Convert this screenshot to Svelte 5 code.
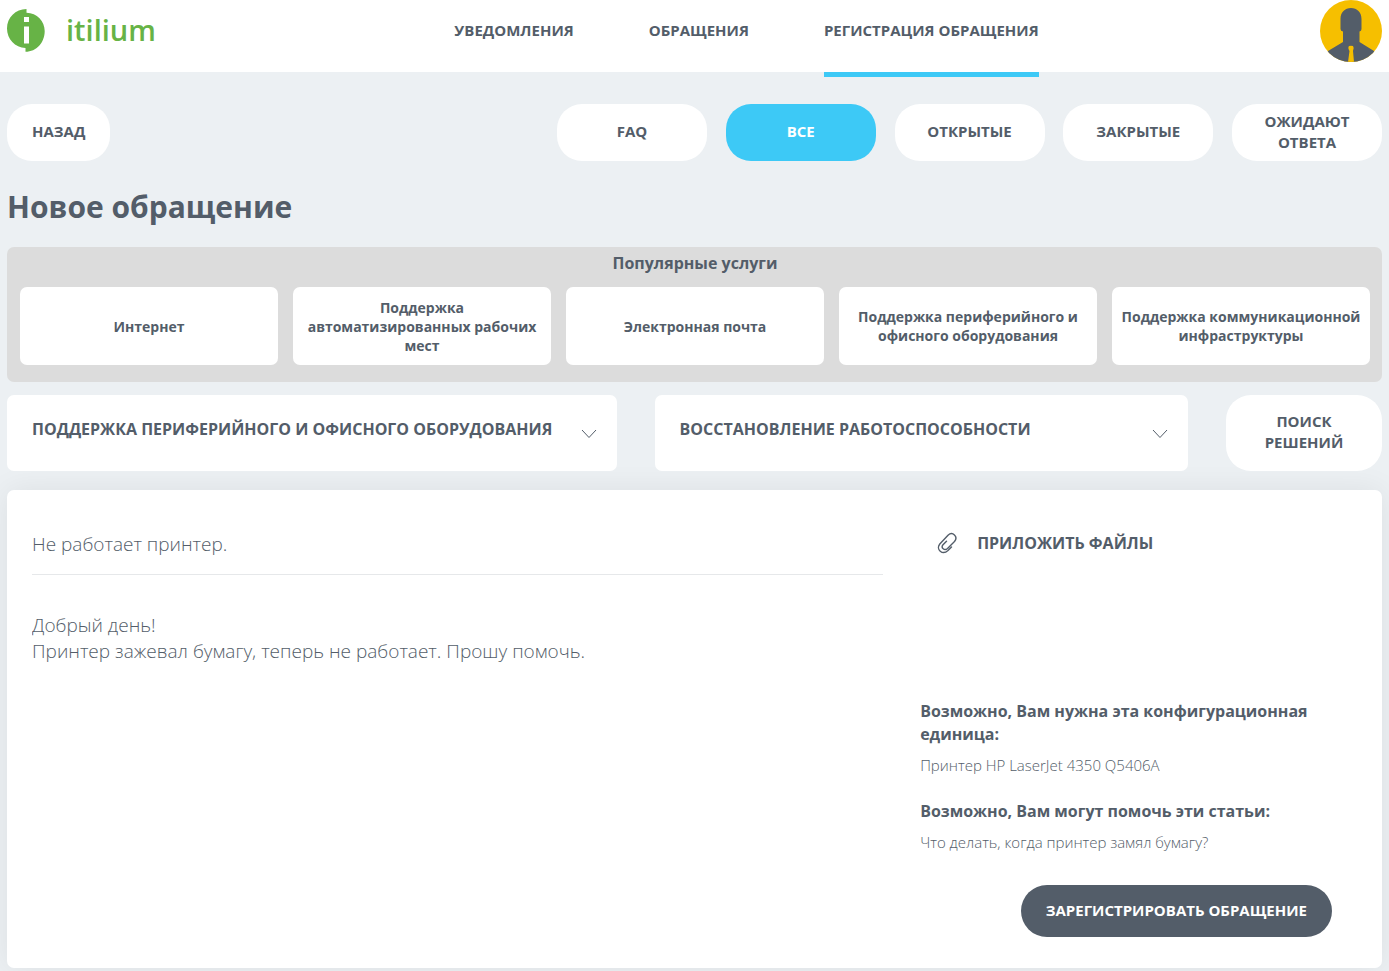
<script>
	const nav = [
		{ label: "Уведомления", href: "#notifications" },
		{ label: "Обращения", href: "#incidents" },
		{ label: "Регистрация обращения", href: "#register" },
	];
	const filters = ["FAQ", "Все", "Открытые", "Закрытые", "Ожидают ответа"];
	const popular = [
		"Интернет",
		"Поддержка автоматизированных рабочих мест",
		"Электронная почта",
		"Поддержка периферийного и офисного оборудования",
		"Поддержка коммуникационной инфраструктуры",
	];
	const services = [
		"Поддержка периферийного и офисного оборудования",
		"Интернет",
		"Электронная почта",
	];
	const components = ["Восстановление работоспособности", "Консультация"];

	let activePage = "#register";
	let activeFilter = "Все";
	let service = services[0];
	let component = components[0];
	let subject = "Не работает принтер.";
	let description =
		"Добрый день!\nПринтер зажевал бумагу, теперь не работает. Прошу помочь.";
</script>

<header>
	<a class="logo" href="#home">
		<svg width="38" height="46" viewBox="0 -2 38 46">
			<path
				fill="#67b346"
				d="M19.500 1V4.700C30 5 37.700 13 37.700 23C37.700 34.500 29.500 43.800 18.500 43.800V40C8 39.500 0 31 0 20.500C0 9.500 8.500 1 19.500 1Z"
			/>
			<path fill="#fff" d="M17 9h5v5h-5zM17 18.500h5V35.500h-5z" />
		</svg>
		<span>itilium</span>
	</a>
	<nav>
		{#each nav as item}
			<a
				href={item.href}
				class:active={item.href === activePage}
				on:click={() => (activePage = item.href)}>{item.label}</a
			>
		{/each}
	</nav>
	<a class="avatar" href="#profile" aria-label="Профиль">
		<svg width="62" height="62" viewBox="0 0 62 62">
			<clipPath id="face"><circle cx="31" cy="31" r="31" /></clipPath>
			<g clip-path="url(#face)">
				<rect width="62" height="62" fill="#f6bf00" />
				<path
					fill="#535d69"
					d="M20.500 19C20.500 12 25 8 31 8S41.500 12 41.500 19V29Q41.500 31 39.500 31.500V42L54 51L62 62H0L8 51L23 42V31.500Q20.500 31 20.500 29Z"
				/>
				<path
					fill="#f6bf00"
					d="M29 46Q31 45.500 33 46Q34.500 48 33 51L34 62H28L29.500 51Q27.500 48 29 46Z"
				/>
			</g>
		</svg>
	</a>
</header>

<main>
	<div class="toolbar">
		<button class="pill">Назад</button>
		<div class="filters">
			{#each filters as filter}
				<button
					class="pill"
					class:active={filter === activeFilter}
					on:click={() => (activeFilter = filter)}>{filter}</button
				>
			{/each}
		</div>
	</div>

	<h1>Новое обращение</h1>

	<section class="popular">
		<h2>Популярные услуги</h2>
		<div class="tiles">
			{#each popular as name}
				<button>{name}</button>
			{/each}
		</div>
	</section>

	<div class="selectors">
		<div class="select">
			<select aria-label="Услуга" bind:value={service}>
				{#each services as name}
					<option>{name}</option>
				{/each}
			</select>
			<svg width="16" height="10" viewBox="0 0 16 10">
				<path d="M1 1L8 8.500L15 1" />
			</svg>
		</div>
		<div class="select">
			<select aria-label="Состав услуги" bind:value={component}>
				{#each components as name}
					<option>{name}</option>
				{/each}
			</select>
			<svg width="16" height="10" viewBox="0 0 16 10">
				<path d="M1 1L8 8.500L15 1" />
			</svg>
		</div>
		<button class="pill">Поиск решений</button>
	</div>

	<form class="card" on:submit|preventDefault>
		<div class="fields">
			<input type="text" aria-label="Тема" bind:value={subject} />
			<textarea aria-label="Описание" bind:value={description}></textarea>
		</div>
		<div class="side">
			<button type="button" class="attach">
				<svg width="20" height="22" viewBox="0 0 20 22">
					<path
						d="M14.500 15L11 18.500C5.500 23.500 -1.500 17.500 2.800 12L11 3.300C15.500 -1 21.500 4.500 17.500 9.500L10.500 16.500C7.500 19 3.500 16 6 12.800L9.500 9.200"
					/>
				</svg>
				Приложить файлы
			</button>
			<div class="hints">
				<h3>Возможно, Вам нужна эта конфигурационная единица:</h3>
				<a href="#item">Принтер HP LaserJet 4350 Q5406A</a>
				<h3>Возможно, Вам могут помочь эти статьи:</h3>
				<a href="#article">Что делать, когда принтер замял бумагу?</a>
			</div>
			<button class="submit">Зарегистрировать обращение</button>
		</div>
	</form>
</main>

<style>
	:global(body) {
		margin: 0;
		background: #ecf0f3;
		color: #535d69;
		font-family: "Open Sans", sans-serif;
	}
	a {
		color: inherit;
		text-decoration: none;
	}
	button,
	select,
	input,
	textarea {
		box-sizing: border-box;
		margin: 0;
		padding: 0;
		border: 0;
		background: none;
		color: inherit;
		font-family: inherit;
	}
	button {
		cursor: pointer;
	}
	header {
		display: flex;
		justify-content: space-between;
		align-items: flex-start;
		height: 72px;
		padding: 0 7px;
		background: #fff;
	}
	.logo {
		display: flex;
		align-items: center;
		gap: 21px;
		width: 166px;
		height: 58px;
		color: #67b346;
		font-size: 29px;
		font-weight: 600;
	}
	nav {
		display: flex;
		gap: 75px;
	}
	nav a {
		height: 72px;
		border-bottom: 5px solid transparent;
		font-size: 15px;
		font-weight: 700;
		line-height: 60px;
		text-transform: uppercase;
	}
	nav a.active {
		border-color: #3dc9f6;
	}
	.avatar svg {
		display: block;
	}
	main {
		padding: 32px 7px 3px;
	}
	.toolbar {
		display: flex;
		justify-content: space-between;
	}
	.filters {
		display: flex;
		justify-content: space-between;
		width: 60%;
	}
	.pill {
		min-height: 57px;
		padding: 0 25px 2px;
		border-radius: 25px;
		background: #fff;
		font-size: 15px;
		font-weight: 700;
		line-height: 21px;
		text-transform: uppercase;
	}
	.filters .pill {
		width: 150px;
	}
	.pill.active {
		background: #3dc9f6;
		color: #fff;
	}
	h1 {
		margin: 26px 0 20px;
		font-size: 30px;
		font-weight: 700;
		line-height: 40px;
	}
	.popular {
		padding: 5px 12px 17px 13px;
		border-radius: 7px;
		background: #dcdcdc;
	}
	h2 {
		margin: 0 0 13px;
		font-size: 16px;
		font-weight: 700;
		line-height: 22px;
		text-align: center;
	}
	.tiles {
		display: grid;
		grid-template-columns: repeat(5, 1fr);
		gap: 15px;
	}
	.tiles button {
		min-height: 78px;
		padding: 0 8px;
		border-radius: 7px;
		background: #fff;
		font-size: 14px;
		font-weight: 700;
		line-height: 19px;
	}
	.selectors {
		display: grid;
		grid-template-columns: 8fr 7fr 156px;
		gap: 38px;
		margin: 13px 0 19px;
	}
	.select {
		display: grid;
		align-items: center;
		border-radius: 7px;
		background: #fff;
	}
	.select > * {
		grid-area: 1 / 1;
	}
	select {
		appearance: none;
		width: 100%;
		height: 76px;
		padding: 0 50px 8px 25px;
		font-size: 16px;
		font-weight: 700;
		text-transform: uppercase;
	}
	.select svg {
		justify-self: end;
		margin: 2px 20px 0 0;
		pointer-events: none;
	}
	svg path {
		stroke-linejoin: round;
	}
	.select path,
	.attach path {
		fill: none;
		stroke: #535d69;
	}
	.card {
		display: grid;
		grid-template-columns: 31fr 15fr;
		gap: 37px;
		padding: 25px 50px 31px 25px;
		border-radius: 7px;
		background: #fff;
		box-shadow: 0 0 30px rgba(0, 0, 0, 0.07);
	}
	.fields {
		display: flex;
		flex-direction: column;
	}
	input {
		height: 60px;
		padding-bottom: 2px;
		border-bottom: 1px solid #e6e8ea;
	}
	input,
	textarea {
		font-size: 19px;
		font-weight: 300;
		line-height: 26px;
	}
	textarea {
		flex: 1;
		margin-top: 37px;
		resize: none;
	}
	.side {
		display: flex;
		flex-direction: column;
	}
	.attach {
		display: flex;
		align-items: center;
		align-self: flex-start;
		gap: 20px;
		height: 56px;
		padding-left: 17px;
		font-size: 16px;
		font-weight: 700;
		text-transform: uppercase;
	}
	.attach path {
		stroke-width: 1.4;
		stroke-linecap: round;
	}
	.hints {
		margin-top: 129px;
	}
	h3 {
		margin: 0 0 8px;
		font-size: 16px;
		font-weight: 700;
		line-height: 23px;
	}
	.hints a {
		display: block;
		font-size: 15px;
		font-weight: 300;
		line-height: 23px;
	}
	.hints a + h3 {
		margin-top: 23px;
	}
	.submit {
		align-self: flex-end;
		height: 52px;
		margin-top: 31px;
		padding: 0 25px 2px;
		border-radius: 26px;
		background: #535d69;
		color: #fff;
		font-size: 15px;
		font-weight: 700;
		text-transform: uppercase;
	}
</style>
